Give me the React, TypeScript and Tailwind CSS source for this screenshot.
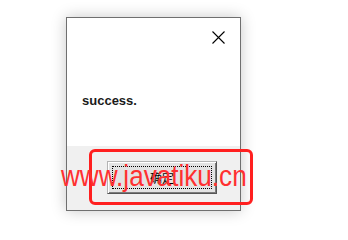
export default function App() {
  return (
    <div className="relative w-[348px] h-[238px] bg-white overflow-hidden font-['Liberation_Sans',sans-serif]">
      {/* message box */}
      <div className="pt-[17px] pl-[66px]">
        <div className="w-[175px] h-[194px] border border-[#6f6f6f] bg-white flex flex-col shadow-[0_0_14px_rgba(0,0,0,0.22)]">
          <div className="h-[128px] flex flex-col">
            <div className="flex justify-end pt-[13px] pr-[15px]">
              <svg width="13" height="13" viewBox="0 0 13 13" className="block">
                <path d="M0.5 0.5 L12.5 12.5 M12.5 0.5 L0.5 12.5" stroke="#000" strokeWidth="1.1" fill="none" />
              </svg>
            </div>
            <p className="mt-[49px] ml-[15px] text-[13px] leading-[16px] font-bold text-[#1a1a1a] font-['Liberation_Sans',sans-serif]">
              success.
            </p>
          </div>
          <div className="flex-1 bg-[#f0f0f0] pt-[15px] pl-[40px]">
            <button className="w-[110px] h-[33px] bg-[#e3e3e3] border border-t-[#b4b4b4] border-l-[#b4b4b4] border-r-[#555] border-b-[#555] shadow-[inset_1px_1px_0_#fff,inset_-1px_-1px_0_#7c7c7c] p-[4px]">
              <span className="flex h-full w-full items-center justify-center border border-dotted border-black text-[12px] text-black font-['Noto_Sans_CJK_SC',sans-serif]">
                确定
              </span>
            </button>
          </div>
        </div>
      </div>

      {/* watermark frame */}
      <div className="absolute left-[89px] top-[149px] w-[164px] h-[56px] border-[3px] border-[#ff1f1f] rounded-[6px]" />
      <div className="absolute left-[61px] top-[159px] origin-left scale-x-[0.9] text-[29px] leading-[34px] text-[#ff3030] whitespace-nowrap font-['Liberation_Sans',sans-serif]">
        www.javatiku.cn
      </div>
    </div>
  );
}
